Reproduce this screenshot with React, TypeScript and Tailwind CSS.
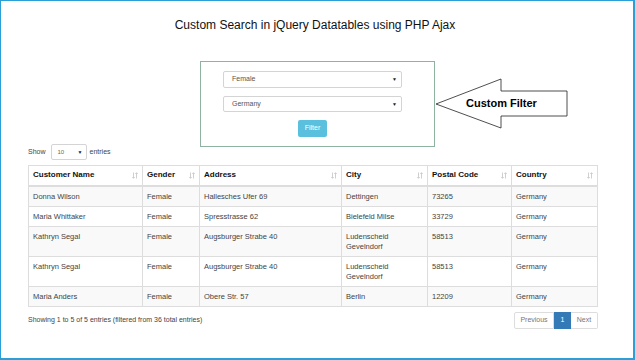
import React from "react";

const rows = [
  ["Donna Wilson", "Female", "Hallesches Ufer 69", "Dettingen", "73265", "Germany"],
  ["Maria Whittaker", "Female", "Spresstrasse 62", "Bielefeld Milse", "33729", "Germany"],
  ["Kathryn Segal", "Female", "Augsburger Strabe 40", "Ludenscheid Gevelndorf", "58513", "Germany"],
  ["Kathryn Segal", "Female", "Augsburger Strabe 40", "Ludenscheid Gevelndorf", "58513", "Germany"],
  ["Maria Anders", "Female", "Obere Str. 57", "Berlin", "12209", "Germany"],
];

const headers: [string, string][] = [
  ["Customer Name", "w-[114px]"],
  ["Gender", "w-[57px]"],
  ["Address", "w-[142px]"],
  ["City", "w-[86px]"],
  ["Postal Code", "w-[84px]"],
  ["Country", "w-[86px]"],
];

function SortIcon() {
  return (
    <svg width="6" height="7" viewBox="0 0 6 7" className="shrink-0">
      <path d="M1.5 0.5 V6.2 M0.3 5 L1.5 6.3 L2.7 5" stroke="#c9c9c9" strokeWidth="0.9" fill="none" />
      <path d="M4.5 6.5 V0.8 M3.3 2 L4.5 0.7 L5.7 2" stroke="#c9c9c9" strokeWidth="0.9" fill="none" />
    </svg>
  );
}

function Caret() {
  return <span className="text-[5px] text-[#222] leading-none">▼</span>;
}

export default function App() {
  return (
    <div className="w-[635px] h-[360px] bg-white border-l border-t border-r-2 border-b-2 border-[#2a9fd8] font-[family-name:'Liberation_Sans',Arial,sans-serif] text-[#333] relative overflow-hidden">
      <div className="pl-[26px] pr-[35px] pt-[17px]">
        <h1 className="text-center text-[12px] leading-[14px] text-[#111] pl-[5px]">
          Custom Search in jQuery Datatables using PHP Ajax
        </h1>

        <div className="ml-[173px] mt-[29px] w-[235px] h-[86px] border border-[#8eb3a0] pl-[22px] pr-[32px] pt-[9px] flex flex-col">
          <div className="h-[17px] border border-[#d4d4d4] rounded-[2px] flex items-center justify-between pl-[8px] pr-[4px] text-[7px] text-[#555]">
            <span>Female</span>
            <Caret />
          </div>
          <div className="mt-[8px] h-[16px] border border-[#d4d4d4] rounded-[2px] flex items-center justify-between pl-[8px] pr-[4px] text-[7px] text-[#555]">
            <span>Germany</span>
            <Caret />
          </div>
          <div className="mt-[8px] flex justify-center">
            <div className="w-[29px] h-[17px] bg-[#5bc0de] rounded-[2px] text-white text-[7px] flex items-center justify-center">
              Filter
            </div>
          </div>
        </div>

        <div className="mt-[-3px] flex items-center text-[7px] text-[#444] pl-[1px]">
          <span>Show</span>
          <div className="ml-[5px] w-[36px] h-[16px] border border-[#d4d4d4] rounded-[2px] flex items-center pl-[6px] pr-[3px] justify-between text-[6px] text-[#666]">
            <span>10</span>
            <Caret />
          </div>
          <span className="ml-[3px]">entries</span>
        </div>

        <table className="mt-[5px] ml-[1px] table-fixed border-collapse border border-[#dddddd] w-[569px] text-[7.5px] leading-[10px]">
          <thead>
            <tr>
              {headers.map(([h, w]) => (
                <th
                  key={h}
                  className={`${w} h-[20px] border border-[#dddddd] border-b-2 px-[4px] text-left font-bold text-[#111] text-[8px]`}
                >
                  <div className="flex items-center justify-between">
                    <span>{h}</span>
                    <SortIcon />
                  </div>
                </th>
              ))}
            </tr>
          </thead>
          <tbody>
            {rows.map((r, i) => (
              <tr key={i} className={i % 2 === 0 ? "bg-[#f9f9f9]" : "bg-white"}>
                {r.map((c, j) => (
                  <td key={j} className="border border-[#dddddd] px-[4px] pt-[5px] pb-[4px] align-top text-[#444]">
                    {c}
                  </td>
                ))}
              </tr>
            ))}
          </tbody>
        </table>

        <div className="mt-[5px] flex items-center justify-between text-[7px] text-[#444] pl-[1px]">
          <span>Showing 1 to 5 of 5 entries (filtered from 36 total entries)</span>
          <div className="flex h-[17px] text-[7px]">
            <div className="w-[40px] border border-[#dddddd] rounded-l-[2px] flex items-center justify-center text-[#777]">
              Previous
            </div>
            <div className="w-[17px] bg-[#337ab7] border border-[#337ab7] flex items-center justify-center text-white">
              1
            </div>
            <div className="w-[27px] border border-[#dddddd] border-l-0 rounded-r-[2px] flex items-center justify-center text-[#777]">
              Next
            </div>
          </div>
        </div>
      </div>

      <div className="absolute left-[434px] top-[77px] w-[134px] h-[52px]">
        <svg width="134" height="52" viewBox="0 0 134 52" className="absolute inset-0">
          <polygon
            points="1,26 66,1 66,13 132,13 132,38 66,38 66,50"
            fill="white"
            stroke="#222"
            strokeWidth="0.8"
          />
        </svg>
        <span className="absolute left-[31px] top-[18px] text-[11px] leading-[14px] font-bold text-black whitespace-nowrap">
          Custom Filter
        </span>
      </div>
    </div>
  );
}
